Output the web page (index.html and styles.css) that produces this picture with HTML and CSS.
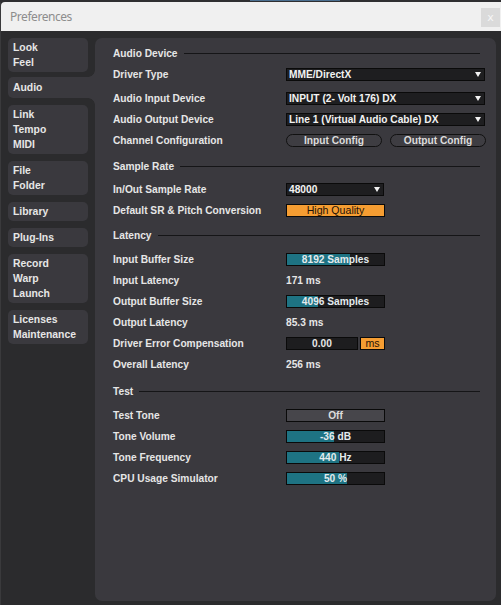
FILE: index.html
```html
<!DOCTYPE html>
<html>
<head>
<meta charset="utf-8">
<link rel="stylesheet" href="styles.css">
</head>
<body>
<div class="topstrip"><div class="blue"></div></div>
<div class="window">
  <div class="titlebar">
    <span class="title">Preferences</span>
    <span class="close">x</span>
  </div>
  <div class="content">
    <nav class="sidebar">
      <div class="tab">Look<br>Feel</div>
      <div class="tab active">Audio</div>
      <div class="tab">Link<br>Tempo<br>MIDI</div>
      <div class="tab">File<br>Folder</div>
      <div class="tab">Library</div>
      <div class="tab">Plug-Ins</div>
      <div class="tab">Record<br>Warp<br>Launch</div>
      <div class="tab">Licenses<br>Maintenance</div>
    </nav>
    <main class="panel">
      <div class="header first"><span>Audio Device</span><i></i></div>
      <div class="row r-first"><span class="label">Driver Type</span><div class="dropdown wide">MME/DirectX<b></b></div></div>
      <div class="row r-gap"><span class="label">Audio Input Device</span><div class="dropdown wide">INPUT (2- Volt 176) DX<b></b></div></div>
      <div class="row"><span class="label">Audio Output Device</span><div class="dropdown wide">Line 1 (Virtual Audio Cable) DX<b></b></div></div>
      <div class="row"><span class="label">Channel Configuration</span><div class="btns"><div class="pill">Input Config</div><div class="pill">Output Config</div></div></div>

      <div class="header sr"><span>Sample Rate</span><i></i></div>
      <div class="row r-after"><span class="label">In/Out Sample Rate</span><div class="dropdown narrow">48000<b></b></div></div>
      <div class="row"><span class="label">Default SR &amp; Pitch Conversion</span><div class="orange box">High Quality</div></div>

      <div class="header lat"><span>Latency</span><i></i></div>
      <div class="row r-after2"><span class="label">Input Buffer Size</span><div class="bar box"><div class="fill" style="width:65%"></div><span>8192 Samples</span></div></div>
      <div class="row"><span class="label">Input Latency</span><span class="value">171 ms</span></div>
      <div class="row"><span class="label">Output Buffer Size</span><div class="bar box"><div class="fill" style="width:32%"></div><span>4096 Samples</span></div></div>
      <div class="row"><span class="label">Output Latency</span><span class="value">85.3 ms</span></div>
      <div class="row"><span class="label">Driver Error Compensation</span><div class="comp"><div class="numbox">0.00</div><div class="orange unit">ms</div></div></div>
      <div class="row"><span class="label">Overall Latency</span><span class="value">256 ms</span></div>

      <div class="header test"><span>Test</span><i></i></div>
      <div class="row r-after2"><span class="label">Test Tone</span><div class="toggle box">Off</div></div>
      <div class="row"><span class="label">Tone Volume</span><div class="bar box"><div class="fill" style="width:48%"></div><span>-36 dB</span></div></div>
      <div class="row"><span class="label">Tone Frequency</span><div class="bar box"><div class="fill" style="width:54%"></div><span>440 Hz</span></div></div>
      <div class="row"><span class="label">CPU Usage Simulator</span><div class="bar box"><div class="fill" style="width:62%"></div><span>50 %</span></div></div>
    </main>
  </div>
</div>
</body>
</html>
```

FILE: styles.css
```css
* { box-sizing: border-box; }
html, body { margin: 0; padding: 0; }
body {
  width: 501px;
  height: 605px;
  background: #2b2b2d;
  font-family: "Liberation Sans", Arial, sans-serif;
  overflow: hidden;
}
.topstrip {
  height: 2px;
  background: #2f2f31;
}
.topstrip .blue {
  margin-left: 250px;
  width: 90px;
  height: 1px;
  background: #4a6f90;
}
.window {
  height: 603px;
  display: flex;
  flex-direction: column;
  border-left: 1px solid #3a3a3c;
}
.titlebar {
  height: 29px;
  background: #f0f0f0;
  border-top-left-radius: 4px;
  display: flex;
  align-items: center;
  justify-content: space-between;
  padding-left: 9px;
  padding-right: 1px;
}
.title {
  font-family: "Noto Sans", "Open Sans", sans-serif;
  font-size: 12px;
  letter-spacing: -0.45px;
  color: #8d8d8d;
}
.close {
  width: 19px;
  height: 19px;
  background: #dadada;
  color: #f6f6f6;
  font-family: "DejaVu Sans", sans-serif;
  font-size: 11px;
  display: flex;
  align-items: center;
  justify-content: center;
  margin-top: 2px;
}
.content {
  flex: 1;
  display: flex;
  padding: 7px 7px 4px 7px;
  background: #2b2b2d;
}
.sidebar {
  width: 87px;
  display: flex;
  flex-direction: column;
  gap: 7px;
}
.tab {
  width: 80px;
  background: #3a393e;
  border-radius: 5px;
  padding: 2px 5px;
  font-size: 10.4px;
  font-weight: 700;
  line-height: 15px;
  color: #e6e6e6;
}
.tab.active {
  width: 87px;
  margin-top: -2px;
  height: 21px;
  padding-top: 3px;
  border-radius: 5px 0 0 5px;
  position: relative;
}
.tab.active::before,
.tab.active::after {
  content: "";
  position: absolute;
  right: 0;
  width: 7px;
  height: 7px;
}
.tab.active::before {
  top: -7px;
  background: radial-gradient(circle at 0 0, transparent 6.5px, #3a393e 7.2px);
}
.tab.active::after {
  bottom: -7px;
  background: radial-gradient(circle at 0 100%, transparent 6.5px, #3a393e 7.2px);
}
.panel {
  flex: 1;
  background: #3a393e;
  border-radius: 7px;
  padding: 8px 10px 0 18px;
  color: #e6e6e6;
  font-size: 10.2px;
  font-weight: 700;
}
.header {
  height: 14px;
  display: flex;
  align-items: center;
  margin-top: 7px;
  margin-right: 6px;
}
.header.first { margin-top: 0; }
.header.sr { margin-top: 8px; }
.header.lat { margin-top: 7px; }
.header.test { margin-top: 9px; }
.header i {
  flex: 1;
  height: 1px;
  background: #151517;
  margin-left: 6px;
}
.row {
  height: 21px;
  display: flex;
  align-items: center;
}
.row.r-first { margin-top: 4px; }
.row.r-gap { margin-top: 3px; }
.row.r-after { margin-top: 6px; }
.row.r-after2 { margin-top: 7px; }
.label {
  width: 173px;
  flex: none;
}
.dropdown {
  height: 13px;
  background: #1e1e20;
  border: 1px solid #0a0a0a;
  color: #f2f2f2;
  padding-left: 2px;
  line-height: 11px;
  position: relative;
  white-space: nowrap;
}
.dropdown.wide { width: 199px; }
.dropdown.narrow { width: 98px; }
.dropdown b {
  position: absolute;
  right: 3px;
  top: 3px;
  width: 0;
  height: 0;
  border-left: 3.5px solid transparent;
  border-right: 3.5px solid transparent;
  border-top: 5px solid #f2f2f2;
}
.btns {
  display: flex;
  gap: 8px;
}
.pill {
  width: 96px;
  height: 13px;
  border: 1px solid #111;
  border-radius: 7px;
  background: #3e3d42;
  color: #dcdcdc;
  text-align: center;
  line-height: 11px;
}
.box {
  width: 99px;
  height: 13px;
  border: 1px solid #0a0a0a;
  line-height: 11px;
  text-align: center;
  position: relative;
}
.orange {
  background: #f59d32;
  color: #1e1208;
  font-weight: 400;
  font-size: 10.6px;
}
.bar {
  background: #1d1d1f;
  color: #e4ebee;
  overflow: hidden;
}
.bar .fill {
  position: absolute;
  left: 0;
  top: 0;
  bottom: 0;
  background: #1e7383;
}
.bar span {
  position: relative;
}
.value { color: #e6e6e6; }
.comp {
  display: flex;
  gap: 2px;
}
.numbox {
  width: 72px;
  height: 13px;
  background: #1d1d1f;
  border: 1px solid #0a0a0a;
  color: #e6e6e6;
  text-align: center;
  line-height: 11px;
}
.unit {
  width: 25px;
  height: 13px;
  border: 1px solid #0a0a0a;
  text-align: center;
  line-height: 11px;
}
.toggle {
  background: #47464b;
  color: #dcdcdc;
}
```
